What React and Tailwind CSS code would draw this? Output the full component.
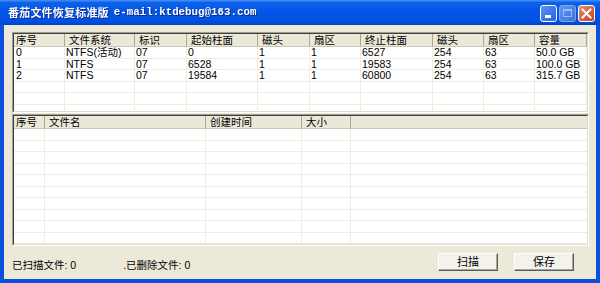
const topCols = [
  { title: "序号", w: 51 },
  { title: "文件系统", w: 70 },
  { title: "标识", w: 52 },
  { title: "起始柱面", w: 71 },
  { title: "磁头", w: 52 },
  { title: "扇区", w: 51 },
  { title: "终止柱面", w: 72 },
  { title: "磁头", w: 51 },
  { title: "扇区", w: 51 },
  { title: "容量", w: 52 },
];

const topRows = [
  ["0", "NTFS(活动)", "07", "0", "1", "1", "6527", "254", "63", "50.0 GB"],
  ["1", "NTFS", "07", "6528", "1", "1", "19583", "254", "63", "100.0 GB"],
  ["2", "NTFS", "07", "19584", "1", "1", "60800", "254", "63", "315.7 GB"],
  [], [], [],
];

const fileCols = [
  { title: "序号", w: 31 },
  { title: "文件名", w: 161 },
  { title: "创建时间", w: 96 },
  { title: "大小", w: 49 },
];

const font = "font-['Liberation_Sans','Noto_Sans_CJK_SC',sans-serif]";

function ListView({ cols, rows, className }) {
  return (
    <div className={`border-t border-l border-[#a09d8e] border-b border-r border-b-white border-r-white ${className}`}>
      <div className="h-full border-t border-l border-[#404040] border-b border-r border-b-[#e0ddd0] border-r-[#e0ddd0] bg-white overflow-hidden">
        {/* header */}
        <div className="flex h-[13px] bg-[#ebe8d7] border-b border-[#cbc7b8]">
          {cols.map((c, i) => (
            <div
              key={i}
              style={{ width: c.w }}
              className={`shrink-0 h-full border-r border-[#aca899] leading-[12px] text-[10.5px] text-black ${i === 0 ? "pl-[2px]" : "pl-[4px]"}`}
            >
              {c.title}
            </div>
          ))}
          <div className="flex-1" />
        </div>
        {/* rows */}
        {rows.map((r, ri) => (
          <div key={ri} className="flex h-[11.5px] border-b border-[#efece2]">
            {cols.map((c, i) => (
              <div
                key={i}
                style={{ width: c.w }}
                className={`shrink-0 h-full border-r border-[#efece2] leading-[11px] text-[10.5px] text-black whitespace-nowrap ${i === 0 ? "pl-[2px]" : "pl-[1px]"}`}
              >
                {r[i] || ""}
              </div>
            ))}
            <div className="flex-1" />
          </div>
        ))}
      </div>
    </div>
  );
}

function XpButton({ children }) {
  return (
    <button className="w-[60px] h-[18px] bg-[#f3f2ec] border-t border-l border-white border-b border-r border-b-[#5a5a5a] border-r-[#5a5a5a] shadow-[inset_-1px_-1px_0_#aca899] text-[11px] leading-[16px] text-black">
      {children}
    </button>
  );
}

export default function App() {
  const fileRows = Array.from({ length: 10 }, () => []);
  return (
    <div className={`w-[600px] h-[283px] bg-[#0a4fdd] flex flex-col overflow-hidden ${font}`}>
      {/* Title bar */}
      <div className="h-[25px] shrink-0 flex items-center pl-[8px] pr-[5px] bg-[linear-gradient(180deg,#4a94f8_0%,#0d62ea_10%,#0356e6_45%,#0052e2_80%,#0045cc_100%)]">
        <span className="text-white font-bold text-[11px] tracking-[0.2px] drop-shadow-[1px_1px_0_#0a2a8a] font-['Noto_Sans_CJK_SC',sans-serif]">
          番茄文件恢复标准版
        </span>
        <span className="ml-[5px] text-white font-bold text-[10.8px] drop-shadow-[1px_1px_0_#0a2a8a] font-['Liberation_Mono',monospace]">
          e-mail:ktdebug@163.com
        </span>
        <div className="ml-auto flex gap-[2px] mt-[1px]">
          <div className="w-[17px] h-[17px] rounded-[3px] border border-white bg-[linear-gradient(135deg,#5e93f8,#2460e0)] flex items-end justify-start pl-[4px] pb-[3px]">
            <div className="w-[6px] h-[3px] bg-white" />
          </div>
          <div className="w-[17px] h-[17px] rounded-[3px] border border-[#9fb9f0] bg-[linear-gradient(135deg,#7aa3f3,#4a7ae6)] flex items-center justify-center opacity-80">
            <div className="w-[9px] h-[8px] border border-[#c6d6f8] border-t-2" />
          </div>
          <div className="w-[17px] h-[17px] rounded-[3px] border border-white bg-[linear-gradient(135deg,#e88a6c,#c5421c)] flex items-center justify-center">
            <svg width="11" height="11" viewBox="0 0 11 11">
              <path d="M1.5 1.5 L9.5 9.5 M9.5 1.5 L1.5 9.5" stroke="white" strokeWidth="2" strokeLinecap="square" />
            </svg>
          </div>
        </div>
      </div>

      {/* Client area */}
      <div className="flex-1 mx-[4px] mb-[4px] bg-[#ece9d8] flex flex-col pl-[8px] pr-[7px] pt-[7px]">
        <ListView cols={topCols} rows={topRows} className="h-[81px] shrink-0" />
        <ListView cols={fileCols} rows={fileRows} className="h-[132px] shrink-0 mt-[1px]" />
        <div className="flex-1 flex items-center text-[10.5px] text-black">
          <span className="mt-[6px]">已扫描文件: 0</span>
          <span className="mt-[6px] ml-[47px]">.已删除文件: 0</span>
          <div className="ml-auto flex gap-[16px] mr-[15px] mb-[1px]">
            <XpButton>扫描</XpButton>
            <XpButton>保存</XpButton>
          </div>
        </div>
      </div>
    </div>
  );
}
